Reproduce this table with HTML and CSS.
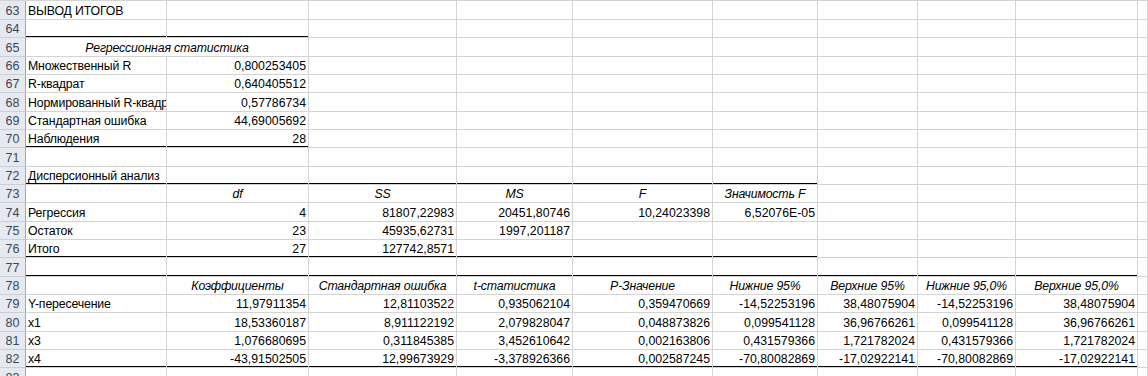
FILE: index.html
```html
<!DOCTYPE html>
<html lang="ru">
<head>
<meta charset="utf-8">
<title>Вывод итогов</title>
<link rel="stylesheet" href="styles.css">
</head>
<body>
<div class="sheet">
  <div class="row h19"><div class="hd">63</div><div class="c">ВЫВОД ИТОГОВ</div><div class="c"></div><div class="c"></div><div class="c"></div><div class="c"></div><div class="c"></div><div class="c"></div><div class="c"></div><div class="c"></div><div class="c"></div></div>
  <div class="row"><div class="hd">64</div><div class="c tb"></div><div class="c tb"></div><div class="c"></div><div class="c"></div><div class="c"></div><div class="c"></div><div class="c"></div><div class="c"></div><div class="c"></div><div class="c"></div></div>
  <div class="row h19"><div class="hd">65</div><div class="c ctr it span2 tn">Регрессионная статистика</div><div class="c"></div><div class="c"></div><div class="c"></div><div class="c"></div><div class="c"></div><div class="c"></div><div class="c"></div><div class="c"></div></div>
  <div class="row"><div class="hd">66</div><div class="c">Множественный R</div><div class="c num">0,800253405</div><div class="c"></div><div class="c"></div><div class="c"></div><div class="c"></div><div class="c"></div><div class="c"></div><div class="c"></div><div class="c"></div></div>
  <div class="row"><div class="hd">67</div><div class="c">R-квадрат</div><div class="c num">0,640405512</div><div class="c"></div><div class="c"></div><div class="c"></div><div class="c"></div><div class="c"></div><div class="c"></div><div class="c"></div><div class="c"></div></div>
  <div class="row h19"><div class="hd">68</div><div class="c">Нормированный R-квадрат</div><div class="c num">0,57786734</div><div class="c"></div><div class="c"></div><div class="c"></div><div class="c"></div><div class="c"></div><div class="c"></div><div class="c"></div><div class="c"></div></div>
  <div class="row"><div class="hd">69</div><div class="c">Стандартная ошибка</div><div class="c num">44,69005692</div><div class="c"></div><div class="c"></div><div class="c"></div><div class="c"></div><div class="c"></div><div class="c"></div><div class="c"></div><div class="c"></div></div>
  <div class="row"><div class="hd">70</div><div class="c tb">Наблюдения</div><div class="c num tb">28</div><div class="c"></div><div class="c"></div><div class="c"></div><div class="c"></div><div class="c"></div><div class="c"></div><div class="c"></div><div class="c"></div></div>
  <div class="row h19"><div class="hd">71</div><div class="c"></div><div class="c"></div><div class="c"></div><div class="c"></div><div class="c"></div><div class="c"></div><div class="c"></div><div class="c"></div><div class="c"></div><div class="c"></div></div>
  <div class="row"><div class="hd">72</div><div class="c tb">Дисперсионный анализ</div><div class="c tb"></div><div class="c tb"></div><div class="c tb"></div><div class="c tb"></div><div class="c tb"></div><div class="c"></div><div class="c"></div><div class="c"></div><div class="c"></div></div>
  <div class="row"><div class="hd">73</div><div class="c tn"></div><div class="c ctr it tn">df</div><div class="c ctr it tn">SS</div><div class="c ctr it tn">MS</div><div class="c ctr it tn">F</div><div class="c ctr it tn">Значимость F</div><div class="c"></div><div class="c"></div><div class="c"></div><div class="c"></div></div>
  <div class="row h19"><div class="hd">74</div><div class="c">Регрессия</div><div class="c num">4</div><div class="c num">81807,22983</div><div class="c num">20451,80746</div><div class="c num">10,24023398</div><div class="c num">6,52076E-05</div><div class="c"></div><div class="c"></div><div class="c"></div><div class="c"></div></div>
  <div class="row"><div class="hd">75</div><div class="c">Остаток</div><div class="c num">23</div><div class="c num">45935,62731</div><div class="c num">1997,201187</div><div class="c"></div><div class="c"></div><div class="c"></div><div class="c"></div><div class="c"></div><div class="c"></div></div>
  <div class="row"><div class="hd">76</div><div class="c tb">Итого</div><div class="c num tb">27</div><div class="c num tb">127742,8571</div><div class="c tb"></div><div class="c tb"></div><div class="c tb"></div><div class="c"></div><div class="c"></div><div class="c"></div><div class="c"></div></div>
  <div class="row h19"><div class="hd">77</div><div class="c tb"></div><div class="c tb"></div><div class="c tb"></div><div class="c tb"></div><div class="c tb"></div><div class="c tb"></div><div class="c tb"></div><div class="c tb"></div><div class="c tb"></div><div class="c"></div></div>
  <div class="row"><div class="hd">78</div><div class="c tn"></div><div class="c ctr it tn">Коэффициенты</div><div class="c ctr it tn">Стандартная ошибка</div><div class="c ctr it tn">t-статистика</div><div class="c ctr it tn">P-Значение</div><div class="c ctr it tn">Нижние 95%</div><div class="c ctr it tn">Верхние 95%</div><div class="c ctr it tn">Нижние 95,0%</div><div class="c ctr it tn">Верхние 95,0%</div><div class="c"></div></div>
  <div class="row"><div class="hd">79</div><div class="c">Y-пересечение</div><div class="c num">11,97911354</div><div class="c num">12,81103522</div><div class="c num">0,935062104</div><div class="c num">0,359470669</div><div class="c num">-14,52253196</div><div class="c num">38,48075904</div><div class="c num">-14,52253196</div><div class="c num">38,48075904</div><div class="c"></div></div>
  <div class="row h19"><div class="hd">80</div><div class="c">x1</div><div class="c num">18,53360187</div><div class="c num">8,911122192</div><div class="c num">2,079828047</div><div class="c num">0,048873826</div><div class="c num">0,099541128</div><div class="c num">36,96766261</div><div class="c num">0,099541128</div><div class="c num">36,96766261</div><div class="c"></div></div>
  <div class="row"><div class="hd">81</div><div class="c">x3</div><div class="c num">1,076680695</div><div class="c num">0,311845385</div><div class="c num">3,452610642</div><div class="c num">0,002163806</div><div class="c num">0,431579366</div><div class="c num">1,721782024</div><div class="c num">0,431579366</div><div class="c num">1,721782024</div><div class="c"></div></div>
  <div class="row"><div class="hd">82</div><div class="c tb">x4</div><div class="c num tb">-43,91502505</div><div class="c num tb">12,99673929</div><div class="c num tb">-3,378926366</div><div class="c num tb">0,002587245</div><div class="c num tb">-70,80082869</div><div class="c num tb">-17,02922141</div><div class="c num tb">-70,80082869</div><div class="c num tb">-17,02922141</div><div class="c"></div></div>
  <div class="row h19"><div class="hd">83</div><div class="c"></div><div class="c"></div><div class="c"></div><div class="c"></div><div class="c"></div><div class="c"></div><div class="c"></div><div class="c"></div><div class="c"></div><div class="c"></div></div>
</div>
</body>
</html>
```
FILE: styles.css
```css
html, body {
  margin: 0;
  padding: 0;
  background: #ffffff;
  overflow: hidden;
}

.sheet {
  width: 1148px;
  border-top: 1px solid #d4d4d4;
  font-family: "Liberation Sans", Arial, sans-serif;
  font-size: 12.3px;
  color: #000000;
}

.row {
  display: grid;
  grid-template-columns: 26px 141px 142px 148px 116px 140px 105px 100px 98px 122px 1fr;
  height: 18px;
}

.row.h19 {
  height: 19px;
}

.hd,
.c {
  box-sizing: border-box;
  display: flex;
  align-items: flex-end;
  white-space: nowrap;
  overflow: hidden;
  line-height: 14px;
  padding: 0 2px 1px 2px;
}

.hd {
  justify-content: center;
  background: #e6eaf0;
  color: #3a4656;
  border-right: 1px solid #9ea8b4;
  border-bottom: 1px solid #c9cfd7;
  font-size: 12.5px;
  padding: 0 0 1px 0;
}

.c {
  position: relative;
  border-right: 1px solid #d4d4d4;
  border-bottom: 1px solid #d4d4d4;
  letter-spacing: -0.15px;
}

.c:not(.span2) {
  overflow: hidden;
}

.span2 {
  grid-column: span 2;
}

.num {
  justify-content: flex-end;
  letter-spacing: 0;
}

.ctr {
  justify-content: center;
}

.it {
  font-style: italic;
}

.tb::after,
.tn::after {
  content: "";
  position: absolute;
  left: 0;
  right: -1px;
  bottom: -1px;
  background: #000000;
}

.tb::after {
  height: 2px;
}

.tn::after {
  height: 1px;
}
```
